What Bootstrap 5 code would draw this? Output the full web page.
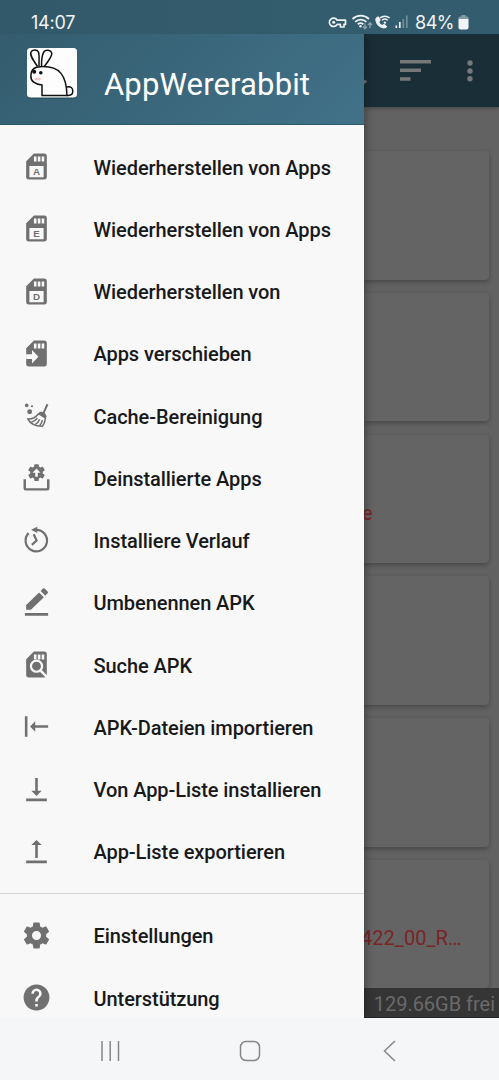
<!DOCTYPE html>
<html lang="de">
<head>
<meta charset="utf-8">
<meta name="viewport" content="width=device-width, initial-scale=1">
<title>AppWererabbit</title>
<link href="https://cdn.jsdelivr.net/npm/bootstrap@5.3.0/dist/css/bootstrap.min.css" rel="stylesheet">
<style>
  body { font-family: Roboto, sans-serif; background: #f5f6f8; }
  .screen { width: 499px; height: 1080px; }
  .statusbar { height: 34px; background: linear-gradient(90deg, #325969, #335d6f); color: #f2f5f7; padding: 10px 30px 0 31px; }
  .clock { font: 400 18px/24px Inter, sans-serif; letter-spacing: -.2px; }
  .percent { font: 400 18px/24px Inter, sans-serif; letter-spacing: -.5px; padding-top: 1px; }
  .clock { padding-top: 1px; }
  .stage { height: 984px; }
  .drawer { width: 364px; background: #f8f8f8; z-index: 2; box-shadow: 0 0 10px rgba(0,0,0,.45); }
  .drawer-head { height: 91px; background: linear-gradient(135deg, #345c6e, #417289); border-bottom: 1px solid #2d5a6e; padding: 13px 0 0 26px; }
  .app-name { color: #fff; font-size: 31px; line-height: 36px; margin: 20px 0 0 26px; letter-spacing: .13px; }
  .entries { padding: 10.4px 0; }
  .entry { height: 62.25px; padding-left: 21px; color: #18191b; font-weight: 500; font-size: 20px; letter-spacing: -.07px; white-space: nowrap; }
  .entry span { padding-top: 2px; }
  .entry svg { width: 31px; height: 31px; margin-right: 41.5px; fill: #707070; flex: none; }
  .entry .ln { fill: none; stroke: #707070; }
  .entry .pale { fill: #f8f8f8; }
  .entry svg text { font: 700 7.6px "Liberation Sans", sans-serif; letter-spacing: 0; }
  .divider { height: 1px; background: #d5d5d5; }
  .backdrop-pane { background: #626262; }
  .toolbar { height: 73px; background: #1a2e37; box-shadow: 0 1px 4px rgba(0,0,0,.3); padding-right: 26px; }
  .toolbar svg { fill: #757779; }
  .cards { padding: 44px 10px 0 0; gap: 13.3px; height: 881px; }
  .tile { height: 128.500px; flex: none; background: #646464; border-radius: 0 4px 4px 0; box-shadow: 0 2px 5px rgba(0,0,0,.28); color: #7a2424; font-size: 20px; line-height: 24px; white-space: nowrap; }
  .tail-e { padding-top: 28px; margin-left: -2px; }
  .tail-r { padding-top: 27px; margin-left: -3px; letter-spacing: .05px; }
  .storage { height: 30px; background: #353535; color: #6a6a6a; font-size: 20px; line-height: 32px; border-bottom: 1px solid #222; padding-right: 4px; letter-spacing: -.02px; z-index: 1; white-space: nowrap; }
  .softkeys { height: 62px; background: #f5f6f8; padding: 4px 96px 0 97px; }
  .softkeys svg { fill: none; stroke: #858688; stroke-width: 1.5; }
</style>
</head>
<body>
<svg class="d-none">
  <symbol id="sd" viewBox="0 0 24 24"><path fill-rule="evenodd" d="M18 2h-8L4 8v12a2 2 0 0 0 2 2h12a2 2 0 0 0 2-2V4a2 2 0 0 0-2-2zM10 4.200h2v4h-2zm3 0h2v4h-2zm3 0h2v4h-2zM6.500 11.700h11v8.600h-11z"/></symbol>
  <symbol id="sdfull" viewBox="0 0 24 24"><path fill-rule="evenodd" d="M18 2h-8L4 8v12a2 2 0 0 0 2 2h12a2 2 0 0 0 2-2V4a2 2 0 0 0-2-2zM10 4.200h2v4h-2zm3 0h2v4h-2zm3 0h2v4h-2z"/></symbol>
  <symbol id="gear" viewBox="0 0 24 24"><path fill-rule="evenodd" d="M19.430 12.980c.04-.32.07-.64.07-.98s-.03-.66-.07-.98l2.110-1.650c.19-.15.24-.42.12-.64l-2-3.460c-.12-.22-.39-.3-.61-.22l-2.490 1c-.52-.4-1.080-.73-1.690-.98l-.38-2.650A.49.49 0 0 0 14 2h-4c-.25 0-.46.18-.49.42l-.38 2.650c-.61.25-1.170.59-1.690.98l-2.490-1c-.23-.09-.49 0-.61.22l-2 3.460c-.13.22-.07.49.12.64l2.110 1.650c-.04.32-.07.65-.07.98s.03.66.07.98l-2.110 1.650c-.19.15-.24.42-.12.64l2 3.460c.12.22.39.3.61.22l2.490-1c.52.4 1.080.73 1.690.98l.38 2.650c.03.24.24.42.49.42h4c.25 0 .46-.18.49-.42l.38-2.650c.61-.25 1.170-.59 1.690-.98l2.490 1c.23.09.49 0 .61-.22l2-3.460c.12-.22.07-.49-.12-.64zM12 15.500a3.500 3.500 0 1 1 0-7 3.500 3.500 0 0 1 0 7z"/></symbol>
</svg>
<div class="screen d-flex flex-column overflow-hidden">
  <header class="statusbar d-flex justify-content-between align-items-start flex-shrink-0">
    <span class="clock">14:07</span>
    <div class="d-flex align-items-start">
      <svg width="88" height="24" viewBox="0 0 88 24" fill="none" stroke="#eef2f4">
        <path d="M10.200 10.200h8.300v4.200H17V17h-3.600v-2.600h-3.200a4.200 4.200 0 1 1 0-4.200z" stroke-width="1.700" stroke-linejoin="round"/>
        <circle cx="6.700" cy="12.300" r="1.500" fill="#eef2f4" stroke="none"/>
        <path d="M25.500 9a12 12 0 0 1 16.500 0M28.100 11.900a8 8 0 0 1 11.300 0M30.800 14.300a4.300 4.300 0 0 1 5.500 0" stroke-width="1.800"/>
        <circle cx="33.500" cy="16.300" r="1.200" fill="#eef2f4" stroke="none"/>
        <path d="M38 13.500v5m-2-2 2 2.300 2-2.300M43 18v-5m-2 2 2-2.300 2 2.300" stroke="#8da3ae" stroke-width="1.300"/>
        <path d="M50.200 6.700c-1.600 1-2.200 2.200-1.700 4.200 1 4 3.600 6.300 7.200 7.400 1.800.5 3.700-.2 4.500-1.800l-3-2.700-2.200 1.200c-1.400-.8-2.200-1.800-2.600-3l1.300-1.900-1.900-3.700z" fill="#eef2f4" stroke="none"/>
        <path d="M52.900 8a7.500 7.500 0 0 1 9.800 0M55 10.300a4.300 4.300 0 0 1 5.700 0" stroke-width="1.500"/><circle cx="57.900" cy="12.600" r="1.200" fill="#eef2f4" stroke="none"/>
        <path d="M69.300 15.500V18M72.800 12v6" stroke-width="1.700"/><path d="M76.300 9v9M79.800 5.500V18" stroke="#70909e" stroke-width="1.700"/>
      </svg>
      <span class="percent">84%</span>
      <svg class="ms-1" width="11" height="24" viewBox="0 0 11 24"><path d="M3.500 5h4v1.500h1.500a1.500 1.500 0 0 1 1.500 1.500v1H.5V8A1.500 1.500 0 0 1 2 6.500h1.500z" fill="#849ba6"/><path d="M.5 9h10v8.500a2 2 0 0 1-2 2h-6a2 2 0 0 1-2-2z" fill="#f2f5f7"/></svg>
    </div>
  </header>

  <main class="stage d-flex flex-shrink-0 overflow-hidden">
    <nav class="drawer d-flex flex-column flex-shrink-0 position-relative">
      <div class="drawer-head d-flex align-items-start flex-shrink-0">
        <svg width="52" height="52" viewBox="0 0 52 52" fill="none" stroke="#111" stroke-width="1.500">
          <rect x="1" y="2" width="50" height="50" rx="3.500" fill="#203e4a" stroke="none" opacity=".5"/>
          <rect x="1" y="1" width="50" height="49.500" rx="3.500" fill="#fdfdfd" stroke="none"/>
          <path d="M11.500 19.500C7 13 3.500 8 5 5c1-2.500 6-3 7.500 0 1 3 .5 9 .5 14M15.500 19c0-6 .5-11 2.300-14 2-3 7-2 8 1 .5 3-4 9-7.500 13.500"/>
          <path d="M16 38c-7-.5-11.500-4-11.100-9C5 21 10 19.500 17 19.500c16 0 23.500 8 24 29H16z"/>
          <path d="M40.800 40c4-1 6 1 6 4.200 0 3.200-2 4.500-6 4.300"/>
          <circle cx="8.200" cy="24.800" r="2" fill="#111" stroke="none"/><circle cx="14.800" cy="25.700" r="1.800" fill="#111" stroke="none"/>
          <ellipse cx="11.700" cy="32" rx="3.200" ry="1.600" fill="#f5c9c9" stroke="none"/>
        </svg>
        <div class="app-name">AppWererabbit</div>
      </div>
      <div class="entries">
        <div class="entry d-flex align-items-center"><svg viewBox="0 0 24 24"><use href="#sd"/><text x="12" y="18.900" text-anchor="middle">A</text></svg><span>Wiederherstellen von Apps</span></div>
        <div class="entry d-flex align-items-center"><svg viewBox="0 0 24 24"><use href="#sd"/><text x="12" y="18.900" text-anchor="middle">E</text></svg><span>Wiederherstellen von Apps</span></div>
        <div class="entry d-flex align-items-center"><svg viewBox="0 0 24 24"><use href="#sd"/><text x="12" y="18.900" text-anchor="middle">D</text></svg><span>Wiederherstellen von</span></div>
        <div class="entry d-flex align-items-center"><svg viewBox="0 0 24 24"><use href="#sdfull"/><path class="pale" d="M4 12.500h4.500V9.300l5 5.200-5 5.200v-3.400H4z"/></svg><span>Apps verschieben</span></div>
        <div class="entry d-flex align-items-center"><svg viewBox="0 0 24 24"><circle cx="4.400" cy="4.200" r="1.400"/><circle cx="8.500" cy="4.800" r=".8"/><circle cx="6.700" cy="9.100" r="1.900"/><path class="ln" stroke-width="1.500" d="m20.500 3.300-3.200 7"/><path d="M14.300 9.300c2.600-.8 5.100.9 5.600 3.800l-1.200.9-5.400-3.600z"/><path class="ln" stroke-width="1.200" stroke-linejoin="round" d="M13.600 10.600c-2 2.600-4.800 4.300-8.300 4 1.700 3.500 5.700 5.600 11 5.800 1.800-1.600 2.300-4 2.500-6.600zM8 17.200c2-.4 3.400-1.500 4.700-3M11.200 18.900c1.500-1 2.500-2.300 3.200-4M14.500 20c1-1.300 1.700-2.700 2-4.500"/></svg><span>Cache-Bereinigung</span></div>
        <div class="entry d-flex align-items-center"><svg viewBox="0 0 24 24"><use href="#gear" x="4.200" y=".4" width="15.600" height="15.600"/><circle cx="12" cy="8.200" r="4.300"/><path class="pale" d="M11 11.500V8.400H8.900L12 5l3.100 3.400H13v3.100z"/><path class="ln" stroke-width="1.900" d="M2.900 13.300v6.900q0 1 1 1h16.200q1 0 1-1v-6.900"/></svg><span>Deinstallierte Apps</span></div>
        <div class="entry d-flex align-items-center"><svg viewBox="0 0 24 24"><path class="ln" stroke-width="1.700" d="M11.500 3.800a8.300 8.300 0 1 1-5.600 2.500"/><path d="M12.600 1.300v4.900L7.800 3.700z"/><path class="ln" stroke-width="1.700" d="m9.800 7.200 2.300 4.800-3.700 3.400"/></svg><span>Installiere Verlauf</span></div>
        <div class="entry d-flex align-items-center"><svg viewBox="0 0 24 24"><path d="M3 20.200h18v2H3zM4 14 14 4.200l3.700 3.700-10 9.700H4zM15.200 3l1.700-1.800q.7-.6 1.400 0l2.300 2.300q.7.700 0 1.400l-1.800 1.800z"/></svg><span>Umbenennen APK</span></div>
        <div class="entry d-flex align-items-center"><svg viewBox="0 0 24 24"><use href="#sdfull"/><circle cx="12" cy="13.300" r="4.300" fill="#707070" stroke="#f8f8f8" stroke-width="1.700"/><path d="m15 16.600 5.500 5.500" stroke="#f8f8f8" stroke-width="2"/></svg><span>Suche APK</span></div>
        <div class="entry d-flex align-items-center"><svg viewBox="0 0 24 24"><path d="M3 4h2v16H3zM7 12l4-4v3h10v2H11v3z"/></svg><span>APK-Dateien importieren</span></div>
        <div class="entry d-flex align-items-center"><svg viewBox="0 0 24 24"><path d="M4 19h16v2H4zM16 13h-3V3h-2v10H8l4 4z"/></svg><span>Von App-Liste installieren</span></div>
        <div class="entry d-flex align-items-center"><svg viewBox="0 0 24 24"><path d="M4 19h16v2H4zM8 7h3v10h2V7h3l-4-4z"/></svg><span>App-Liste exportieren</span></div>
      </div>
      <div class="divider flex-shrink-0"></div>
      <div class="entries">
        <div class="entry d-flex align-items-center"><svg viewBox="0 0 24 24"><use href="#gear"/></svg><span>Einstellungen</span></div>
        <div class="entry d-flex align-items-center"><svg viewBox="0 0 24 24"><path d="M12 2a10 10 0 1 0 0 20 10 10 0 0 0 0-20zm1 17h-2v-2h2zm2.070-7.750-.9.920C13.450 12.900 13 13.500 13 15h-2v-.5c0-1.100.45-2.100 1.170-2.830l1.240-1.260c.37-.36.59-.86.59-1.410a2 2 0 0 0-4 0H8a4 4 0 0 1 8 0c0 .88-.36 1.680-.93 2.250z"/></svg><span>Unterstützung</span></div>
      </div>
    </nav>

    <section class="backdrop-pane flex-grow-1 d-flex flex-column">
      <div class="toolbar d-flex justify-content-between align-items-center flex-shrink-0">
        <svg width="68" height="40" viewBox="0 0 68 40"><path d="M0 29.500l1-1 2 2-3 3z"/><path d="M36 9h31v3.500H36zM36 17.500h21V21H36zM36 26.200h10.500v3.500H36z"/></svg>
        <svg width="6" height="40" viewBox="0 0 6 40"><circle cx="3" cy="12" r="2.700"/><circle cx="3" cy="20" r="2.700"/><circle cx="3" cy="27.700" r="2.700"/></svg>
      </div>
      <div class="cards d-flex flex-column overflow-hidden flex-shrink-0">
        <div class="tile"></div>
        <div class="tile"></div>
        <div class="tile d-flex align-items-center"><span class="tail-e">e</span></div>
        <div class="tile"></div>
        <div class="tile"></div>
        <div class="tile d-flex align-items-center"><span class="tail-r">422_00_R…</span></div>
      </div>
      <div class="storage text-end flex-shrink-0">129.66GB frei</div>
    </section>
  </main>

  <footer class="softkeys d-flex justify-content-between align-items-center flex-shrink-0">
    <svg width="26" height="24" viewBox="0 0 26 24"><path d="M5 2v20M13.200 2v20M21.500 2v20"/></svg>
    <svg width="24" height="24" viewBox="0 0 24 24"><rect x="2.500" y="2.500" width="19" height="19" rx="5.500"/></svg>
    <svg width="26" height="24" viewBox="0 0 26 24"><path d="M18 2 7.500 12 18 22"/></svg>
  </footer>
</div>
<script src="https://cdn.jsdelivr.net/npm/bootstrap@5.3.0/dist/js/bootstrap.bundle.min.js"></script>
</body>
</html>
